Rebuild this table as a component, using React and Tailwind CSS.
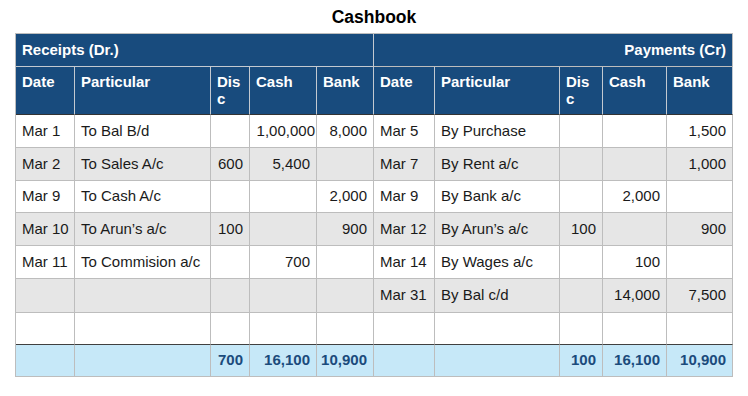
import React from "react";

const rows = [
  ["Mar 1", "To Bal B/d", "", "1,00,000", "8,000", "Mar 5", "By Purchase", "", "", "1,500"],
  ["Mar 2", "To Sales A/c", "600", "5,400", "", "Mar 7", "By Rent a/c", "", "", "1,000"],
  ["Mar 9", "To Cash A/c", "", "", "2,000", "Mar 9", "By Bank a/c", "", "2,000", ""],
  ["Mar 10", "To Arun’s a/c", "100", "", "900", "Mar 12", "By Arun’s a/c", "100", "", "900"],
  ["Mar 11", "To Commision a/c", "", "700", "", "Mar 14", "By Wages a/c", "", "100", ""],
  ["", "", "", "", "", "Mar 31", "By Bal c/d", "", "14,000", "7,500"],
  ["", "", "", "", "", "", "", "", "", ""],
];

const heights = ["h-[33px]", "h-[33px]", "h-[32px]", "h-[33px]", "h-[33px]", "h-[34px]", "h-[32px]"];
const numericCols = [2, 3, 4, 7, 8, 9];
const totals = ["", "", "700", "16,100", "10,900", "", "", "100", "16,100", "10,900"];
const heads = ["Date", "Particular", "Dis\nc", "Cash", "Bank", "Date", "Particular", "Dis\nc", "Cash", "Bank"];

export default function App() {
  return (
    <div className="w-[748px] h-[396px] bg-white text-[#1a1a1a]" style={{ fontFamily: '"Liberation Sans", Arial, Helvetica, sans-serif' }}>
      <div className="h-[33px] text-center font-bold text-[17.5px] leading-[35px] text-black">Cashbook</div>
      <div className="ml-[15px] w-[718px] border-l border-t border-[#bdbdbd] grid grid-cols-[59px_136px_39px_67px_57px_61px_125px_43px_64px_66px]">
        <div className="col-span-5 h-[33px] bg-[#184b7d] text-white font-bold text-[15px] flex items-center px-[6px] border-r border-b border-[#c3c9d0]">
          Receipts (Dr.)
        </div>
        <div className="col-span-5 h-[33px] bg-[#184b7d] text-white font-bold text-[15px] flex items-center justify-end pr-[6px] border-r border-b border-[#bdbdbd]">
          Payments (Cr)
        </div>
        {heads.map((h, i) => (
          <div
            key={"h" + i}
            className="h-[48px] bg-[#184b7d] text-white font-bold text-[15px] leading-[17px] pt-[6px] px-[6px] whitespace-pre border-r border-[#c3c9d0] border-b-[1px] border-b-[#333333]"
          >
            {h}
          </div>
        ))}
        {rows.map((r, ri) =>
          r.map((c, ci) => {
            const num = numericCols.includes(ci);
            const bg = ri % 2 === 1 ? "bg-[#e6e6e6]" : "bg-white";
            const bottom = ri === rows.length - 1 ? "border-b-[#404040]" : "border-b-[#bdbdbd]";
            const pad = c === "1,00,000" ? "pl-[1px] pr-[1px]" : "px-[6px]";
            return (
              <div
                key={ri + "-" + ci}
                className={`${heights[ri]} ${bg} ${pad} flex items-center ${num ? "justify-end" : ""} text-[15px] whitespace-nowrap border-r border-r-[#bdbdbd] border-b ${bottom}`}
              >
                {c}
              </div>
            );
          })
        )}
        {totals.map((c, ci) => (
          <div
            key={"t" + ci}
            className="h-[32px] bg-[#c6e8f8] px-[6px] flex items-center justify-end text-[15px] font-bold text-[#1b4b7c] border-r border-b border-[#bdbdbd]"
          >
            {c}
          </div>
        ))}
      </div>
    </div>
  );
}
